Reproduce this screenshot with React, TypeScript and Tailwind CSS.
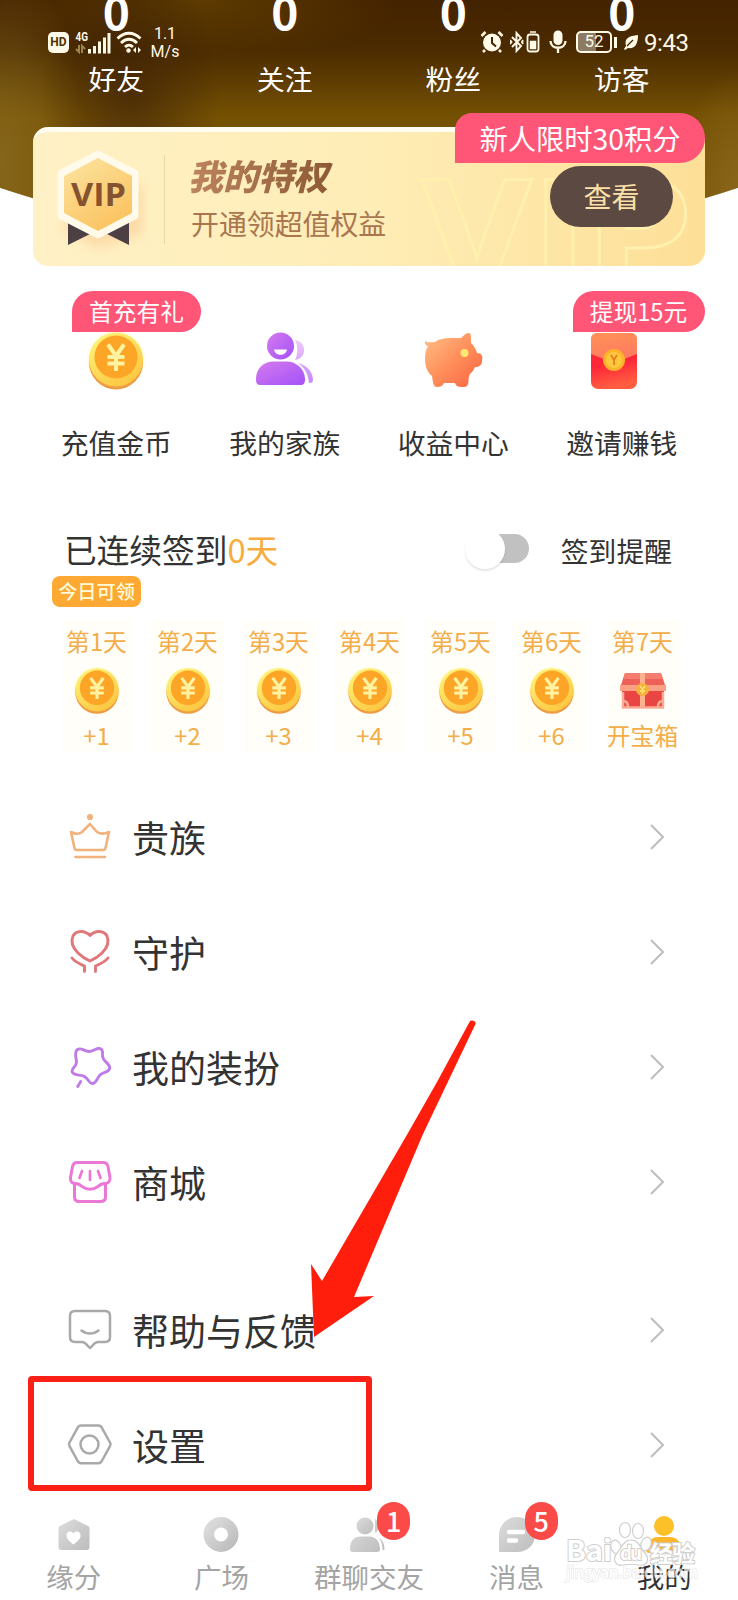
import React from "react";
import clsx from "clsx";

const counts = ["好友", "关注", "粉丝", "访客"];

const days = ["+1", "+2", "+3", "+4", "+5", "+6", "开宝箱"];

const Coin = ({ className }: { className?: string }) => (
  <svg viewBox="0 0 60 60" className={className}>
    <defs>
      <linearGradient id="coinRim" x1="0" y1="0" x2="0.6" y2="1">
        <stop offset="0" stopColor="#fff87e" />
        <stop offset="1" stopColor="#fcc843" />
      </linearGradient>
      <radialGradient id="coinGlow">
        <stop offset="0.75" stopColor="#fff26a" stopOpacity="0.7" />
        <stop offset="1" stopColor="#fff26a" stopOpacity="0" />
      </radialGradient>
    </defs>
    <circle cx="30" cy="29" r="30" fill="url(#coinGlow)" />
    <circle cx="30" cy="31.5" r="27" fill="#ed9d45" />
    <circle cx="30" cy="28.5" r="27" fill="url(#coinRim)" />
    <circle cx="30" cy="26" r="21.5" fill="#fda526" />
    <path
      d="M22 13.500l8 11.500 8-11.500M30 24V40M21.500 26h17M21.500 32.500h17"
      fill="none"
      stroke="#fff2a0"
      strokeWidth="4"
    />
  </svg>
);

const Family = () => (
  <svg viewBox="0 0 60 60" className="h-[60px] w-[60px]">
    <defs>
      <linearGradient id="fam" x1="0" y1="0" x2="1" y2="1">
        <stop offset="0" stopColor="#d67bee" />
        <stop offset="1" stopColor="#a351f8" />
      </linearGradient>
      <linearGradient id="famBack" x1="0" y1="0" x2="0" y2="1">
        <stop offset="0" stopColor="#efc9fb" />
        <stop offset="1" stopColor="#c489fa" />
      </linearGradient>
    </defs>
    <path d="M40 9c6 1 9 5 9 10 0 5-3 9-9 10 3-6 3-14 0-20zM43 32c9 2 15 9 15 17 0 2-1 3-4 3-1-9-4-15-11-20z" fill="url(#famBack)" />
    <circle cx="25.500" cy="15" r="13.500" fill="url(#fam)" />
    <path d="M1 48C1 37 9 30.500 18 30.500h14C41 30.500 50 38 50 48c0 4-1 6-5 6H6c-4 0-5-2-5-6z" fill="url(#fam)" />
    <path d="M19 18.500h13c-1 7-12 7-13 0z" fill="#fff" />
  </svg>
);

const Pig = () => (
  <svg viewBox="0 0 60 60" className="h-[60px] w-[60px]">
    <defs>
      <linearGradient id="pig" x1="0" y1="0" x2="1" y2="1">
        <stop offset="0" stopColor="#ffc088" />
        <stop offset="0.5" stopColor="#ff8f5b" />
        <stop offset="1" stopColor="#f9623f" />
      </linearGradient>
    </defs>
    <path
      d="M2 10c3 2 7 1 10 1 4-3 9-4 15-4h11c3-3 5-5 8-5 2 0 2 4 2 10 3 3 5 6 6 10 5 0 6 3 5 8 0 4-3 6-7 6-1 3-3 5-5 7-2 3-1 7-2 10-1 3-3 3-6 3-4 0-6-1-7-4H21c-1 3-4 4-7 4-4 0-4-5-5-11C4 41 2 35 2 27c0-5 1-9 3-12-3-1-3-3-3-5z"
      fill="url(#pig)"
    />
    <circle cx="41.500" cy="22" r="4" fill="#ffe873" />
  </svg>
);

const Envelope = () => (
  <svg viewBox="0 0 46 56" className="mr-[15px] h-14 w-[46px]">
    <defs>
      <linearGradient id="flap" x1="0" y1="0" x2="0.3" y2="1">
        <stop offset="0" stopColor="#ff9257" />
        <stop offset="1" stopColor="#ff7a60" />
      </linearGradient>
      <linearGradient id="envBody" x1="0" y1="0" x2="0.2" y2="1">
        <stop offset="0" stopColor="#ff2c25" />
        <stop offset="0.6" stopColor="#ff2538" />
        <stop offset="1" stopColor="#ff5c40" />
      </linearGradient>
    </defs>
    <rect width="46" height="56" rx="7" fill="url(#envBody)" />
    <path d="M0 21V7c0-5 2-7 7-7h32c5 0 7 2 7 7v14L23 30z" fill="url(#flap)" />
    <circle cx="23" cy="27" r="11" fill="#fcb32a" />
    <circle cx="23" cy="27" r="8" fill="#fdc73e" />
    <path d="M20 22l3 5 3-5M23 27v5" fill="none" stroke="#ea7a1c" strokeWidth="1.700" />
  </svg>
);

const Chest = () => (
  <svg viewBox="0 0 46 38" className="h-[38px] w-[46px]">
    <path d="M5 1h36l4 12v6H1v-6z" fill="#ee6158" />
    <path d="M5 1h36l2 6H3z" fill="#f47d70" />
    <path d="M2 19h42v14c0 2-1 3-3 3H5c-2 0-3-1-3-3z" fill="#e94643" />
    <path d="M0 13h46v6H0z" fill="#fba084" />
    <path d="M20 1h5v35h-5z" fill="#fcb28d" />
    <path d="M3 20v15.500h40V20M3 29c4 0 5 3 5 6M43 29c-4 0-5 3-5 6" fill="none" stroke="#f9ab95" strokeWidth="2.500" />
    <circle cx="22.500" cy="17.500" r="6.500" fill="#f8b03d" />
    <path d="M20 14l2.500 3.500L25 14M22.500 17.500V22M20 19h5" fill="none" stroke="#fde575" strokeWidth="1.300" />
  </svg>
);

const quick = [
  { label: "充值金币", icon: <Coin className="h-[60px] w-[60px]" />, tag: "首充有礼" },
  { label: "我的家族", icon: <Family /> },
  { label: "收益中心", icon: <Pig /> },
  { label: "邀请赚钱", icon: <Envelope />, tag: "提现15元" },
];

const line = { fill: "none", strokeLinecap: "round", strokeLinejoin: "round" } as const;

const menu = [
  {
    label: "贵族",
    icon: (
      <g stroke="#f1b27c" strokeWidth="2.600" {...line}>
        <circle cx="22" cy="2" r="1.800" fill="#f1b27c" />
        <path d="M3 17c4 2 8 2.500 11 0l8-8 7 8c4 2.500 8 2 12 0l-3.500 16c-.3 1.500-1 2-2.500 2H9c-1.500 0-2.200-.5-2.500-2zM7.500 42h29.500" />
      </g>
    ),
  },
  {
    label: "守护",
    icon: (
      <g stroke="#e0777a" strokeWidth="2.900" {...line}>
        <path d="M22 5.500C17 0 8 0 5 6c-3 7 0 12 5 17 4 4 7 6 12 8 5-2 8-4 12-8 5-5 8-10 5-17-3-6-12-6-17-.500zM4 28c3 4 8 6 12.500 8v5.500M40 28c-3 4-8 6-12.500 8v5.500" />
      </g>
    ),
  },
  {
    label: "我的装扮",
    icon: (
      <g stroke="#bf7be8" strokeWidth="2.900" {...line}>
        <path d="M21 6.500C26 6.500 30 1 33.500 4.500 36 7 33 10 35.500 14 38 18 43 20 41.500 24 40 28 35 26.500 32 30 29 33 28 39 24 38.500 20.500 38 20 32.500 15.500 31 11.500 29.500 5.500 31 4 26.500 3.500 23 9 21 8.500 16.500 8 12 6 7 9.500 4.500 13 2 16 6.500 21 6.500zM12.700 36.500l-3 5" />
      </g>
    ),
  },
  {
    label: "商城",
    icon: (
      <g stroke="#ea78d4" strokeWidth="3" {...line}>
        <path d="M9 2.500h26c3 0 4.500 1.500 5 4l2 11c.5 4-2 6-5 6-3 0-5 1-7 3-5 3.500-11 3.500-16 0-2-2-4-3-7-3-3 0-5-2-4.500-6L4.500 6.500c.5-2.500 1.500-4 4.500-4zM6.500 24v13c0 3 2 4.500 5 4.500h21c3 0 5-1.500 5-4.500V24" />
        <path d="M14 11l-2.500 7M22 11v9M30 11l2.500 7" strokeWidth="2.700" />
      </g>
    ),
  },
  {
    label: "帮助与反馈",
    icon: (
      <g stroke="#a9a9a9" strokeWidth="2.500" {...line}>
        <path d="M7 3h30c3.500 0 5 1.500 5 5v21c0 3.500-1.500 5-5 5h-7c-4 0-5 4-8 6-3-2-4-6-8-6H7c-3.500 0-5-1.500-5-5V8c0-3.500 1.500-5 5-5z" />
        <path d="M13.500 22.500c5 4 12 4 17 0" />
      </g>
    ),
  },
  {
    label: "设置",
    icon: (
      <g stroke="#a9a9a9" strokeWidth="2.500" {...line}>
        <path d="M13 2.500h17.500c1.500 0 2.300.5 3 1.700L42 19.500c.8 1.300.8 2.300 0 3.600L33.500 38.500c-.7 1.200-1.500 1.700-3 1.700H13c-1.500 0-2.300-.5-3-1.700L1.500 23.100c-.8-1.300-.8-2.300 0-3.600L10 4.200C10.700 3 11.500 2.500 13 2.500z" />
        <circle cx="21.500" cy="21.500" r="9" />
      </g>
    ),
  },
];

const tabs = [
  {
    label: "缘分",
    icon: (
      <>
        <path d="M19 1l14 7c1 .7 1.500 1.500 1.500 3v18c0 2-1 3-3 3H6.500c-2 0-3-1-3-3V11c0-1.500.5-2.300 1.500-3z" fill="url(#tabGray)" />
        <path d="M18.500 26.500c-4-3-7-5.500-7-9 0-4.500 5-5 7-2 2-3 7-2.500 7 2 0 3.500-3 6-7 9z" fill="#fff" />
      </>
    ),
  },
  {
    label: "广场",
    icon: <circle cx="19" cy="16.500" r="12.200" fill="none" stroke="url(#tabGray)" strokeWidth="10.500" />,
  },
  {
    label: "群聊交友",
    badge: "1",
    icon: (
      <>
        <circle cx="15" cy="8" r="8.500" fill="url(#tabGray)" />
        <path d="M0 31c0-8 4-12.500 11-12.500h8c7 0 11 5 11 12.500 0 2-.5 3-3 3H3c-2 0-3-1-3-3zM25 1c5 3 5 11 0 14zM29 20c4 2 5.500 6 5.500 12h-2c0-5-1-9-3.500-12z" fill="url(#tabGray)" />
      </>
    ),
  },
  {
    label: "消息",
    badge: "5",
    icon: (
      <>
        <path d="M1 34V17C1 7 9-1 19-1s18 8 18 18-8 17-18 17z" fill="url(#tabGray)" />
        <path d="M11 14h14M11 22.500h7" stroke="#fff" strokeWidth="4.500" strokeLinecap="round" />
      </>
    ),
  },
  {
    label: "我的",
    active: true,
    icon: (
      <>
        <circle cx="19" cy="8" r="10" fill="#fcc128" />
        <path d="M1 32c0-7 5-13 12-13h12c7 0 12 6 12 13 0 2-1 3-3 3H4c-2 0-3-1-3-3z" fill="#fcb62c" />
      </>
    ),
  },
];

const StatusBar = () => (
  <div className="absolute top-[26px] left-0 flex h-8 w-full items-center justify-between pr-[48px] pl-[48px] text-[#fff9e8]">
    <div className="flex h-8 items-center">
      <span className="flex h-[21px] w-[21px] items-center justify-center rounded-[5px] bg-[#fff9e8] font-['Roboto'] text-[12px] font-bold text-[#4f3200]">
        HD
      </span>
      <svg viewBox="0 0 36 26" className="ml-[6px] h-[26px] w-9">
        <text x="0.500" y="12" fontSize="13" fontWeight="700" textLength="12.500" lengthAdjust="spacingAndGlyphs" fontFamily="Roboto, sans-serif" fill="currentColor">
          4G
        </text>
        <path d="M4 16v7l-3-3M7 24v-7l3 3" fill="none" stroke="#9d834f" strokeWidth="2" />
        <path d="M14.500 20v4.500M19.500 17v7.500M24.500 12.500v12M29.500 8.500v16M34 4v20.500" stroke="currentColor" strokeWidth="3" />
      </svg>
      <svg viewBox="0 0 27 24" className="ml-[5px] h-6 w-[27px]">
        <path d="M1.500 8.500c7-7 16-7 23 0M5 13c5-5 11-5 16 0M9 17c2.500-2.500 5.500-2.500 8 0" fill="none" stroke="currentColor" strokeWidth="2.800" />
        <circle cx="12.500" cy="20.500" r="2.200" fill="currentColor" />
        <path d="M20 17v6l-3-3zM22 17v6l3-3z" fill="currentColor" />
      </svg>
      <div className="mt-px ml-[7px] flex w-[30px] flex-col items-center font-['Roboto'] text-[16px] leading-[18px]">
        <span>1.1</span>
        <span>M/s</span>
      </div>
    </div>
    <div className="flex items-center">
      <svg viewBox="0 0 24 24" className="h-6 w-6">
        <circle cx="12" cy="12.500" r="9" fill="currentColor" />
        <path d="M1.500 6l4-4M22.500 6l-4-4M5 20l-2 2M19 20l2 2" stroke="currentColor" strokeWidth="2.500" />
        <path d="M12 7v6l4 3.500" fill="none" stroke="#432300" strokeWidth="2" />
      </svg>
      <svg viewBox="0 0 14 22" className="ml-[6px] h-[22px] w-[14px]">
        <path d="M2 6l9 9-4.500 5V2L11 7l-9 9M0 9l1.500 2L0 13M13 9l-1 2 1 2" fill="none" stroke="currentColor" strokeWidth="1.900" />
      </svg>
      <svg viewBox="0 0 14 22" className="ml-[2px] h-[22px] w-[14px]">
        <rect x="1.500" y="3.500" width="11" height="17" rx="2.500" fill="none" stroke="currentColor" strokeWidth="1.800" />
        <path d="M4 1h6M4.500 10.500h5v7h-5z" stroke="currentColor" strokeWidth="1.500" fill="currentColor" />
      </svg>
      <svg viewBox="0 0 18 24" className="ml-[9px] h-6 w-[18px]">
        <rect x="4.500" y="0.500" width="9" height="14.500" rx="4.500" fill="currentColor" />
        <path d="M1.500 11c0 9 15 9 15 0M9 18v5" fill="none" stroke="currentColor" strokeWidth="2.300" />
      </svg>
      <div className="ml-[9px] flex h-[22px] w-9 items-center justify-center rounded-[5px] border-2 border-[#fff9e8] bg-linear-to-r from-[#8c7a62] from-55% to-[#432300] to-55% font-['Roboto'] text-[17px]">
        52
      </div>
      <span className="ml-[2px] h-[11px] w-[3px] bg-[#fff9e8]" />
      <svg viewBox="0 0 16 18" className="ml-[6px] h-[18px] w-4">
        <path d="M15 2c0 9-3 14-10 13l-3 2-1-1 2-3C1 5 6 3 15 2z" fill="currentColor" />
        <path d="M4 13l6-6" stroke="#432300" strokeWidth="1.300" />
      </svg>
      <span className="mt-[2px] ml-[5px] w-[46px] font-['Roboto'] text-[24px] leading-6 tracking-[-0.4px] whitespace-nowrap">9:43</span>
    </div>
  </div>
);

const VipCard = () => (
  <section className="relative mx-auto mt-9 h-[139px] w-[672px] text-[#a97650]">
    <div className="flex h-full items-center overflow-hidden rounded-[15px] border-t-[5px] border-[#fffdf2] bg-linear-to-r from-[#fff1c6] via-[#feedb6] to-[#fddf97]">
      <svg viewBox="0 0 100 110" className="mt-[3px] ml-[15px] h-[110px] w-[100px] shrink-0">
        <defs>
          <linearGradient id="hex" x1="0.200" y1="0" x2="0.800" y2="1">
            <stop offset="0" stopColor="#fbe29c" />
            <stop offset="1" stopColor="#fcc05c" />
          </linearGradient>
          <filter id="soft" x="-30%" y="-30%" width="160%" height="160%">
            <feGaussianBlur stdDeviation="6" />
          </filter>
        </defs>
        <path d="M50 22l44 20v45l-44 15-35-20z" fill="#f9b87c" opacity="0.400" filter="url(#soft)" />
        <path d="M20 75l28 10-28 14zM81 75L53 85l28 14z" fill="#4c4044" />
        <path d="M50 8l37 19v43L50 89 13 70V27z" fill="#fffaea" stroke="#fffaea" strokeWidth="7" strokeLinejoin="round" />
        <path d="M50 12l34 18v37L50 85 16 67V30z" fill="url(#hex)" />
        <text x="50.500" y="60" textAnchor="middle" textLength="55" lengthAdjust="spacingAndGlyphs" fontSize="33" fontWeight="700" fontFamily="Open Sans, sans-serif" fill="#855330">
          VIP
        </text>
      </svg>
      <div className="ml-[16px] h-[89px] w-px bg-[#f0d5a4]" />
      <div className="ml-[26px] flex w-[206px] shrink-0 flex-col whitespace-nowrap">
        <h2 className="-ml-[3px] w-fit bg-linear-to-r from-[#bd8560] to-[#8b5934] bg-clip-text pr-2 text-[35px] leading-[40px] font-black text-transparent italic">
          我的特权
        </h2>
        <p className="mt-[10px] mb-[3px] text-[27.900px] leading-[36px]">开通领超值权益</p>
      </div>
      <div className="mt-[72px] ml-[24px] h-[100px] shrink-0 font-['DejaVu_Sans'] text-[144px] leading-[100px] font-bold text-transparent [-webkit-text-stroke:3px_#fff0ad]">
        VIP
      </div>
    </div>
    <div className="absolute top-[-14px] right-0 flex h-[50px] w-[250px] items-center justify-center rounded-[25px] rounded-tl-[17px] rounded-bl-none bg-[#ff5577] text-[28.300px] text-white">
      新人限时30积分
    </div>
    <button className="absolute top-[39px] right-[32px] flex h-[61px] w-[123px] items-center justify-center rounded-full bg-[#5c4941] pb-px text-[28px] text-[#fbe0a8]">
      查看
    </button>
  </section>
);

const CheckIn = () => (
  <section className="mt-[60px] h-[246px]">
    <div className="flex h-[62px] items-center pr-[66px] pl-[64px]">
      <h3 className="-mt-[3px] text-[32.700px] leading-[60px] text-[#333]">
        已连续签到<span className="text-[#f7ac3d]">0天</span>
      </h3>
      <div className="-mt-[3px] ml-auto flex h-[29px] w-[52px] items-center rounded-full bg-[#c1c1c1]">
        <span className="-ml-3 h-10 w-10 shrink-0 rounded-full bg-white shadow-[0_2px_2px_rgba(0,0,0,0.1)]" />
      </div>
      <span className="mt-px ml-8 text-[27.800px] text-[#333]">签到提醒</span>
    </div>
    <div className="mt-[-5px] ml-[52px] flex h-[31px] w-[89px] items-center justify-center rounded-[8px] bg-[#fda934] text-[19.200px] font-medium text-[#fffbd8]">
      今日可领
    </div>
    <div className="mt-[13px] ml-[51px] grid w-[637px] grid-cols-7">
      {days.map((d, i) => (
        <div key={d} className="mx-auto flex h-[132px] w-[72px] flex-col items-center bg-[#fffef9] text-[#f3ad49]">
          <span className="mt-[4px] text-[23.800px] leading-[34px] whitespace-nowrap">第{i + 1}天</span>
          <div className="mt-[9px] flex h-12 items-center">{i < 6 ? <Coin className="h-12 w-12" /> : <Chest />}</div>
          <span className="mt-[3px] text-[23.800px] leading-[34px] whitespace-nowrap">{d}</span>
        </div>
      ))}
    </div>
  </section>
);

const TabBar = () => (
  <nav className="grid h-[96px] grid-cols-5">
    {tabs.map((t) => (
      <div key={t.label} className="relative flex flex-col items-center pt-[14px]">
        <svg viewBox="0 0 38 36" className="h-9 w-[38px] overflow-visible">
          <defs>
            <linearGradient id="tabGray" x1="0" y1="0" x2="1" y2="1">
              <stop offset="0" stopColor="#dcdcdc" />
              <stop offset="1" stopColor="#bdbdbd" />
            </linearGradient>
          </defs>
          {t.icon}
        </svg>
        <span className={clsx("mt-[2px] text-[27.500px] leading-[40px]", t.active ? "text-[#333]" : "text-[#a4a4a4]")}>
          {t.label}
        </span>
        {t.badge && (
          <span className="absolute top-[-2px] left-[82px] flex h-[38px] w-[33px] items-center justify-center rounded-[17px] bg-[#fb4b49] text-[27px] font-medium text-white">
            {t.badge}
          </span>
        )}
      </div>
    ))}
  </nav>
);

const Watermark = () => (
  <svg viewBox="0 0 140 70" className="absolute top-[1516px] left-[562px] h-[70px] w-[140px]">
    <g fill="#fff" stroke="#cfcfcf" strokeWidth="1.200">
      <ellipse cx="54" cy="31" rx="5" ry="7" transform="rotate(-20 54 31)" />
      <ellipse cx="63" cy="14" rx="5.500" ry="7.500" />
      <ellipse cx="76" cy="15" rx="5.500" ry="7.500" />
      <ellipse cx="84" cy="28" rx="5" ry="7" transform="rotate(20 84 28)" />
      <path d="M69 24c8 0 9 8 14 13 5 6 2 14-6 12-5-1-10-1-15 0-9 2-12-6-7-12 5-5 6-13 14-13z" />
      <g fontFamily="Noto Sans CJK SC, sans-serif" fontWeight="700" strokeWidth="2" paintOrder="stroke">
        <text x="4" y="45" fontSize="28" textLength="46" lengthAdjust="spacingAndGlyphs">Bai</text>
        <text x="58" y="44" fontSize="19" textLength="22">du</text>
        <text x="88" y="46" fontSize="23" textLength="45">经验</text>
        <text x="4" y="62" fontSize="15.500" fontWeight="500" textLength="132" stroke="#ddd" strokeWidth="1.300" opacity="0.700">
          jingyan.baidu.com
        </text>
      </g>
    </g>
  </svg>
);

export default function App() {
  return (
    <main className="relative h-[1600px] w-[738px] overflow-hidden bg-white font-['Noto_Sans_CJK_SC',sans-serif]">
      <div className="absolute inset-x-0 top-0 h-[260px] bg-[radial-gradient(ellipse_90px_130px_at_130px_90px,rgba(60,32,8,0.65),transparent),radial-gradient(ellipse_90px_200px_at_0px_160px,rgba(140,110,35,0.7),transparent),radial-gradient(ellipse_60px_120px_at_738px_190px,rgba(145,110,35,0.7),transparent),radial-gradient(ellipse_200px_60px_at_200px_0px,rgba(110,75,0,0.6),transparent),linear-gradient(180deg,#432200_0px,#4b2b00_50px,#745003_115px,#7a5707_260px)] [clip-path:circle(1160px_at_50%_-912px)]" />

      <div className="relative">
        <div className="mx-auto grid w-[674px] grid-cols-4 text-center text-white">
          {counts.map((c) => (
            <div key={c} className="flex flex-col items-center">
              <span className="h-[21px] text-[46px] leading-[21px] font-bold">0</span>
              <span className="mt-[43px] h-7 text-[27.800px] leading-7">{c}</span>
            </div>
          ))}
        </div>

        <div className="-mt-px">
          <VipCard />
        </div>

        <section className="mx-auto mt-[25px] grid w-[674px] grid-cols-4">
          {quick.map((q) => (
            <div key={q.label} className="relative flex h-[180px] flex-col items-center">
              <div className="mt-[40px] flex h-[60px] items-center">{q.icon}</div>
              <span className="mt-[30px] text-[27.800px] leading-[42px] text-[#333]">{q.label}</span>
              {q.tag && (
                <span
                  className={clsx(
                    "absolute top-0 flex h-[41px] items-center justify-center rounded-[21px] rounded-bl-none bg-[#ff5577] text-[23.700px] text-white",
                    q.tag === "首充有礼" ? "left-[40px] w-[129px]" : "left-[35px] w-[132px]"
                  )}
                >
                  {q.tag}
                </span>
              )}
            </div>
          ))}
        </section>

        <div className="mt-[-12px]">
          <CheckIn />
        </div>

        <ul className="mt-[16px]">
          {menu.map((m, i) => (
            <li key={m.label} className={clsx("flex h-[115px] items-center pr-[73px] pl-[68px]", i === 4 && "mt-[33px]")}>
              <svg viewBox="0 0 44 44" className="mb-[3px] h-11 w-11 overflow-visible">
                {m.icon}
              </svg>
              <span className="ml-5 pb-px text-[37px] text-[#333]">{m.label}</span>
              <svg viewBox="0 0 16 26" className="mb-[4px] ml-auto h-[26px] w-4">
                <path d="M2 1l12 12L2 25" fill="none" stroke="#bdbdbd" strokeWidth="2" />
              </svg>
            </li>
          ))}
        </ul>

        <TabBar />
      </div>

      <StatusBar />
      <Watermark />

      <div className="absolute top-[1376px] left-[28px] h-[115px] w-[344px] rounded-[4px] border-[6px] border-[#fb2016]" />
      <svg viewBox="0 0 66 320" className="absolute top-[1018px] left-[310px] h-[320px] w-[66px] overflow-visible">
        <path d="M4 319L1 246l11 17L98 115 127 64 159.500 4c1.500-3 7-1 6 2L134 72l-21 44-69 163 20-1z" fill="#ff1d0b" />
      </svg>
    </main>
  );
}
